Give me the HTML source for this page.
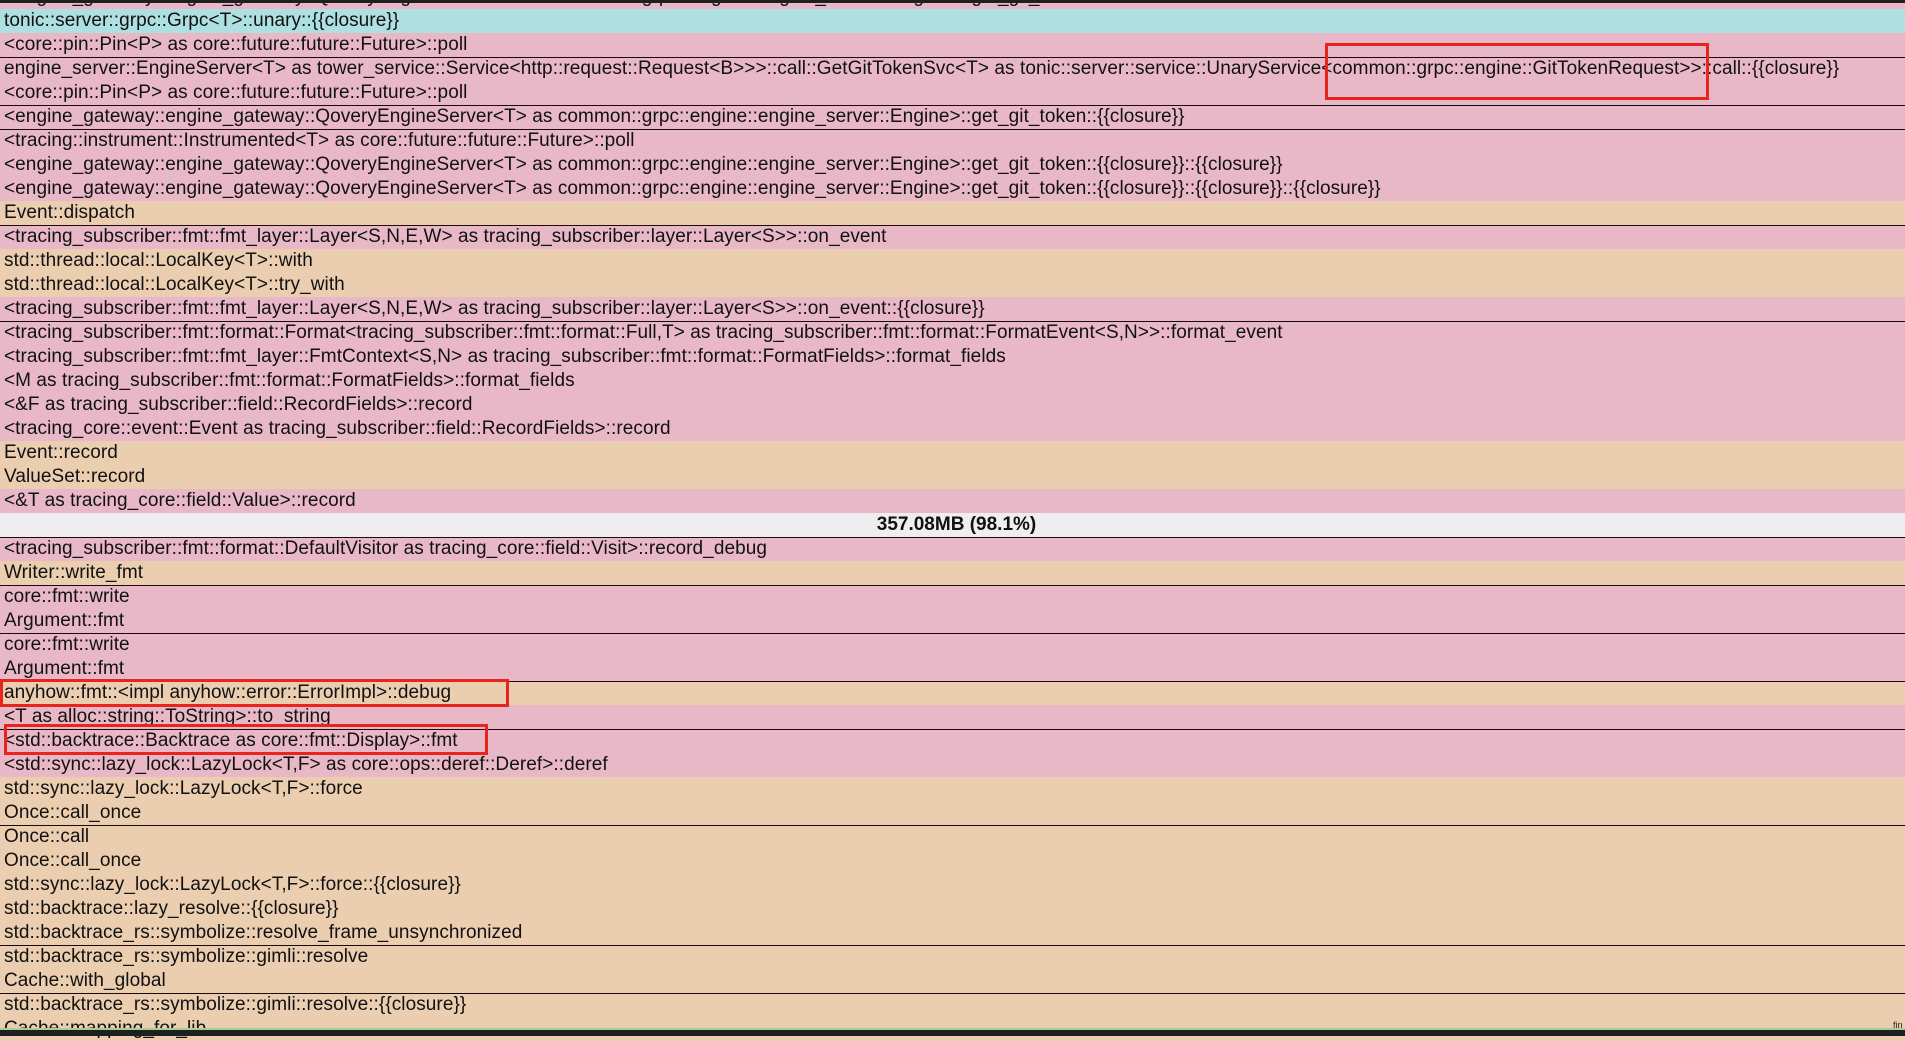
<!DOCTYPE html>
<html><head><meta charset="utf-8"><style>
html,body{margin:0;padding:0;}
body{width:1905px;height:1036px;position:relative;overflow:hidden;background:#ebcdb0;font-family:"Liberation Sans",Arial,sans-serif;}
.r{position:absolute;left:0;width:1905px;height:24px;line-height:24px;font-size:19px;letter-spacing:0.07px;color:#111;white-space:nowrap;padding-left:4px;box-sizing:border-box;overflow:hidden;}
.p{background:#e9b8c8;}
.t{background:#ebcdb0;}
.c{background:#aee0e1;}
.g{background:#efedf0;text-align:center;font-weight:bold;font-size:19px;padding-left:8px;letter-spacing:0;}
.l{position:absolute;left:0;width:1905px;height:1px;background:#1a0a0a;}
.box{position:absolute;border:3px solid #e8241f;box-sizing:border-box;}
</style></head><body>
<div class="r p" style="top:-15px">&lt;engine_gateway::engine_gateway::QoveryEngineServer&lt;T&gt; as common::grpc::engine::engine_server::Engine&gt;::get_git_token</div>
<div style="position:absolute;top:0;left:0;width:1905px;height:3px;background:#1f1f22"></div>
<div class="r c" style="top:9px">tonic::server::grpc::Grpc&lt;T&gt;::unary::{{closure}}</div>
<div class="r p" style="top:33px">&lt;core::pin::Pin&lt;P&gt; as core::future::future::Future&gt;::poll</div>
<div class="r p" style="top:57px">engine_server::EngineServer&lt;T&gt; as tower_service::Service&lt;http::request::Request&lt;B&gt;&gt;&gt;::call::GetGitTokenSvc&lt;T&gt; as tonic::server::service::UnaryService&lt;common::grpc::engine::GitTokenRequest&gt;&gt;::call::{{closure}}</div>
<div class="r p" style="top:81px">&lt;core::pin::Pin&lt;P&gt; as core::future::future::Future&gt;::poll</div>
<div class="r p" style="top:105px">&lt;engine_gateway::engine_gateway::QoveryEngineServer&lt;T&gt; as common::grpc::engine::engine_server::Engine&gt;::get_git_token::{{closure}}</div>
<div class="r p" style="top:129px">&lt;tracing::instrument::Instrumented&lt;T&gt; as core::future::future::Future&gt;::poll</div>
<div class="r p" style="top:153px">&lt;engine_gateway::engine_gateway::QoveryEngineServer&lt;T&gt; as common::grpc::engine::engine_server::Engine&gt;::get_git_token::{{closure}}::{{closure}}</div>
<div class="r p" style="top:177px">&lt;engine_gateway::engine_gateway::QoveryEngineServer&lt;T&gt; as common::grpc::engine::engine_server::Engine&gt;::get_git_token::{{closure}}::{{closure}}::{{closure}}</div>
<div class="r t" style="top:201px">Event::dispatch</div>
<div class="r p" style="top:225px">&lt;tracing_subscriber::fmt::fmt_layer::Layer&lt;S,N,E,W&gt; as tracing_subscriber::layer::Layer&lt;S&gt;&gt;::on_event</div>
<div class="r t" style="top:249px">std::thread::local::LocalKey&lt;T&gt;::with</div>
<div class="r t" style="top:273px">std::thread::local::LocalKey&lt;T&gt;::try_with</div>
<div class="r p" style="top:297px">&lt;tracing_subscriber::fmt::fmt_layer::Layer&lt;S,N,E,W&gt; as tracing_subscriber::layer::Layer&lt;S&gt;&gt;::on_event::{{closure}}</div>
<div class="r p" style="top:321px">&lt;tracing_subscriber::fmt::format::Format&lt;tracing_subscriber::fmt::format::Full,T&gt; as tracing_subscriber::fmt::format::FormatEvent&lt;S,N&gt;&gt;::format_event</div>
<div class="r p" style="top:345px">&lt;tracing_subscriber::fmt::fmt_layer::FmtContext&lt;S,N&gt; as tracing_subscriber::fmt::format::FormatFields&gt;::format_fields</div>
<div class="r p" style="top:369px">&lt;M as tracing_subscriber::fmt::format::FormatFields&gt;::format_fields</div>
<div class="r p" style="top:393px">&lt;&amp;F as tracing_subscriber::field::RecordFields&gt;::record</div>
<div class="r p" style="top:417px">&lt;tracing_core::event::Event as tracing_subscriber::field::RecordFields&gt;::record</div>
<div class="r t" style="top:441px">Event::record</div>
<div class="r t" style="top:465px">ValueSet::record</div>
<div class="r p" style="top:489px">&lt;&amp;T as tracing_core::field::Value&gt;::record</div>
<div class="r g" style="top:513px">357.08MB (98.1%)</div>
<div class="r p" style="top:537px">&lt;tracing_subscriber::fmt::format::DefaultVisitor as tracing_core::field::Visit&gt;::record_debug</div>
<div class="r t" style="top:561px">Writer::write_fmt</div>
<div class="r p" style="top:585px">core::fmt::write</div>
<div class="r p" style="top:609px">Argument::fmt</div>
<div class="r p" style="top:633px">core::fmt::write</div>
<div class="r p" style="top:657px">Argument::fmt</div>
<div class="r t" style="top:681px">anyhow::fmt::&lt;impl anyhow::error::ErrorImpl&gt;::debug</div>
<div class="r p" style="top:705px">&lt;T as alloc::string::ToString&gt;::to_string</div>
<div class="r p" style="top:729px">&lt;std::backtrace::Backtrace as core::fmt::Display&gt;::fmt</div>
<div class="r p" style="top:753px">&lt;std::sync::lazy_lock::LazyLock&lt;T,F&gt; as core::ops::deref::Deref&gt;::deref</div>
<div class="r t" style="top:777px">std::sync::lazy_lock::LazyLock&lt;T,F&gt;::force</div>
<div class="r t" style="top:801px">Once::call_once</div>
<div class="r t" style="top:825px">Once::call</div>
<div class="r t" style="top:849px">Once::call_once</div>
<div class="r t" style="top:873px">std::sync::lazy_lock::LazyLock&lt;T,F&gt;::force::{{closure}}</div>
<div class="r t" style="top:897px">std::backtrace::lazy_resolve::{{closure}}</div>
<div class="r t" style="top:921px">std::backtrace_rs::symbolize::resolve_frame_unsynchronized</div>
<div class="r t" style="top:945px">std::backtrace_rs::symbolize::gimli::resolve</div>
<div class="r t" style="top:969px">Cache::with_global</div>
<div class="r t" style="top:993px">std::backtrace_rs::symbolize::gimli::resolve::{{closure}}</div>
<div class="r t" style="top:1017px">Cache::mapping_for_lib</div>

<div class="l" style="top:57px"></div>
<div class="l" style="top:105px"></div>
<div class="l" style="top:129px"></div>
<div class="l" style="top:225px"></div>
<div class="l" style="top:321px"></div>
<div class="l" style="top:537px"></div>
<div class="l" style="top:585px"></div>
<div class="l" style="top:633px"></div>
<div class="l" style="top:681px"></div>
<div class="l" style="top:729px"></div>
<div class="l" style="top:825px"></div>
<div class="l" style="top:945px"></div>
<div class="l" style="top:993px"></div>

<div class="box" style="left:1325px;top:43px;width:384px;height:57px"></div>
<div class="box" style="left:0;top:679px;width:509px;height:28px"></div>
<div class="box" style="left:4px;top:724px;width:484px;height:31px"></div>

<div style="position:absolute;left:1893px;top:1020px;font-size:9px;color:#222">fin</div>
<div style="position:absolute;left:0;top:1028px;width:1905px;height:2px;background:#a4d095"></div>
<div style="position:absolute;left:0;top:1030px;width:1905px;height:6px;background:#1f1f22"></div>
</body></html>
